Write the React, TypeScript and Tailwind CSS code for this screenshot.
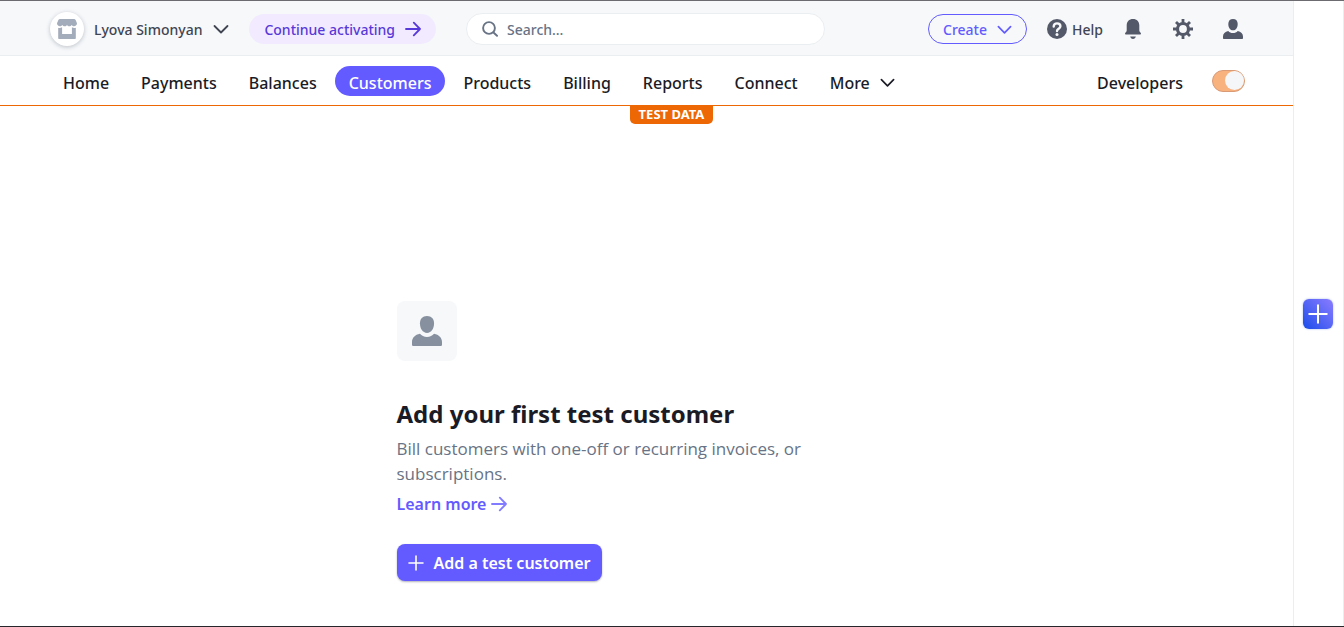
import type { ReactNode } from 'react';

type IconProps = { className?: string };

function ChevronDown({ className = '' }: IconProps) {
  return (
    <svg viewBox="0 0 16 16" className={className} fill="none" stroke="currentColor" strokeWidth="1.8" strokeLinecap="round" strokeLinejoin="round" aria-hidden="true">
      <path d="M1.500 5 8 11.500 14.500 5" />
    </svg>
  );
}

function ArrowRight({ className = '' }: IconProps) {
  return (
    <svg viewBox="0 0 16 16" className={className} fill="none" stroke="currentColor" strokeWidth="1.8" strokeLinecap="round" strokeLinejoin="round" aria-hidden="true">
      <path d="M1 8h14M8.800 1.600 15 8l-6.200 6.400" />
    </svg>
  );
}

function Plus({ className = '' }: IconProps) {
  return (
    <svg viewBox="0 0 16 16" className={className} fill="none" stroke="currentColor" strokeWidth="1.6" strokeLinecap="round" aria-hidden="true">
      <path d="M8 1v14M1 8h14" />
    </svg>
  );
}

function Store({ className = '' }: IconProps) {
  return (
    <svg viewBox="0 0 20 20" className={className} fill="currentColor" aria-hidden="true">
      <path d="M3 0h14c.8 0 1.300.4 1.600 1.100L20 4.300c0 1.700-1.300 2.900-2.900 2.900-1 0-1.900-.5-2.400-1.300-.5.800-1.400 1.300-2.400 1.300S10.500 6.700 10 5.900c-.5.800-1.300 1.300-2.300 1.300S5.800 6.700 5.300 5.900c-.5.800-1.400 1.300-2.400 1.300C1.300 7.200 0 6 0 4.300l1.400-3.200C1.700.4 2.200 0 3 0Z" />
      <path d="M1.200 8.700c1.300.4 2.700.2 3.900-.5V15h9.800V8.200c1.200.7 2.600.9 3.900.5V19c0 .6-.4 1-1 1H2.200c-.6 0-1-.4-1-1V8.700Z" />
    </svg>
  );
}

function Search({ className = '' }: IconProps) {
  return (
    <svg viewBox="0 0 16 16" className={className} fill="none" stroke="currentColor" strokeWidth="1.9" strokeLinecap="round" aria-hidden="true">
      <circle cx="7" cy="7" r="5.9" />
      <path d="m11.500 11.500 3.500 3.300" />
    </svg>
  );
}

function Question({ className = '' }: IconProps) {
  return (
    <svg viewBox="0 0 20 20" className={className} aria-hidden="true">
      <circle cx="10" cy="10" r="10" fill="#545969" />
      <path d="M6.700 7.500C6.700 5.600 8.100 4.400 10 4.400s3.400 1.200 3.400 2.900c0 2.400-3.400 2.500-3.400 4.700" fill="none" stroke="#f6f8fa" strokeWidth="2.4" strokeLinecap="round" />
      <circle cx="10" cy="15.400" r="1.5" fill="#f6f8fa" />
    </svg>
  );
}

function Bell({ className = '' }: IconProps) {
  return (
    <svg viewBox="0 0 16 20" className={className} fill="currentColor" aria-hidden="true">
      <path d="M8 0c3.900 0 6.300 2.600 6.300 6.300v5.200c0 .8.400 1.200.9 1.700.5.500.8.900.8 1.500 0 .5-.3.800-.8.800H.8c-.5 0-.8-.3-.8-.8 0-.6.300-1 .8-1.500s.9-.9.900-1.700V6.300C1.700 2.600 4.100 0 8 0Z" />
      <path d="M5.200 17.500h5.600C10.500 19 9.500 20 8 20s-2.500-1-2.800-2.500Z" />
    </svg>
  );
}

function Gear({ className = '' }: IconProps) {
  return (
    <svg viewBox="0 0 20 20" className={className} fill="none" stroke="currentColor" aria-hidden="true">
      <circle cx="10" cy="10" r="5.500" strokeWidth="3.200" />
      <path strokeWidth="2.800" strokeLinejoin="round" d="M10 0v4M10 16v4M0 10h4M16 10h4M3 3l2.800 2.800M14.200 14.200l2.800 2.800M3 17l2.800-2.800M14.200 5.800 17 3" />
    </svg>
  );
}

function Person({ className = '' }: IconProps) {
  return (
    <svg viewBox="0 0 20 20" className={className} fill="currentColor" aria-hidden="true">
      <path d="M10 0c3 0 4.700 2 4.700 4.900 0 3.600-1.800 6.400-4.700 6.400S5.300 8.500 5.300 4.900C5.300 2 7 0 10 0Z" />
      <path d="M5.300 11.900C6.400 13.200 8 14 10 14s3.600-.8 4.700-2.100c3.300.6 5.300 2.700 5.300 5.600v1.500c0 .7-.4 1-1 1H1c-.6 0-1-.3-1-1v-1.500c0-2.900 2-5 5.300-5.600Z" />
    </svg>
  );
}

function NavLink({ children, active = false }: { children: ReactNode; active?: boolean }) {
  return (
    <a
      href="#"
      aria-current={active ? 'page' : undefined}
      className={
        active
          ? 'flex h-[30px] items-center rounded-full bg-[#635bff] px-[14px] pt-1 text-white'
          : 'flex h-[30px] items-center px-[14px] pt-1 text-[#1a1b25]'
      }
    >
      {children}
    </a>
  );
}

function TopBar() {
  return (
    <header className="flex h-[55px] items-center border-b border-[#ebeef1] bg-[#f6f8fa] pt-[2px] pr-[50px] pl-[50px] text-[14px] font-medium text-[#414552]">
      <button type="button" className="flex items-center">
        <span className="mr-[10px] flex size-[34px] items-center justify-center rounded-full bg-white text-[#a3acba] shadow-[0_1px_4px_rgba(60,66,87,0.3)]">
          <Store className="size-5" />
        </span>
        <span>Lyova Simonyan</span>
        <ChevronDown className="ml-[11px] size-4" />
      </button>
      <a href="#" className="ml-5 flex h-[30px] items-center gap-[10px] rounded-full bg-[#f2ebff] px-[15px] text-[#5739d9]">
        Continue activating
        <ArrowRight className="size-4" />
      </a>
      <label className="ml-[30px] flex h-8 max-w-[359px] flex-1 items-center gap-[9px] rounded-full border border-[#ebeef1] bg-white px-[15px] text-[#687385]">
        <Search className="size-4" />
        <input type="text" aria-label="Search" placeholder="Search…" className="min-w-0 flex-1 bg-transparent outline-none placeholder:text-[#687385]" />
      </label>
      <div className="ml-auto flex items-center">
        <button type="button" className="flex h-[30px] items-center gap-[10px] rounded-full border border-[#635bff] px-[14px] text-[#635bff]">
          Create
          <ChevronDown className="size-[15px]" />
        </button>
        <button type="button" className="ml-5 flex items-center gap-[5px]">
          <Question className="size-5" />
          Help
        </button>
        <button type="button" aria-label="Notifications" className="ml-[22px] text-[#545969]">
          <Bell className="h-5 w-4" />
        </button>
        <button type="button" aria-label="Settings" className="ml-8 text-[#545969]">
          <Gear className="size-5" />
        </button>
        <button type="button" aria-label="Profile" className="ml-[30px] text-[#545969]">
          <Person className="size-5" />
        </button>
      </div>
    </header>
  );
}

function MainNav() {
  return (
    <nav className="flex h-[50px] items-center border-b border-[#ed6704] pr-12 pl-[49px] text-[16px] font-medium">
      <div className="flex items-center gap-1">
        <NavLink>Home</NavLink>
        <NavLink>Payments</NavLink>
        <NavLink>Balances</NavLink>
        <NavLink active>Customers</NavLink>
        <NavLink>Products</NavLink>
        <NavLink>Billing</NavLink>
        <NavLink>Reports</NavLink>
        <NavLink>Connect</NavLink>
        <NavLink>
          More
          <ChevronDown className="ml-[10px] size-[15px]" />
        </NavLink>
      </div>
      <div className="ml-auto flex items-center gap-[15px]">
        <NavLink>Developers</NavLink>
        <label className="relative flex h-[22px] w-[33px] cursor-pointer items-center justify-end rounded-full border border-[#d99a76] bg-[#f8b27e]">
          <input type="checkbox" defaultChecked aria-label="Test mode" className="absolute inset-0 opacity-0" />
          <span className="size-[19px] rounded-full bg-[#f5f6f8]" />
        </label>
      </div>
    </nav>
  );
}

function EmptyState() {
  return (
    <section className="mx-auto flex w-full max-w-[500px] flex-1 flex-col items-start pt-[177px] pb-11">
      <div className="flex size-[60px] items-center justify-center rounded-lg bg-[#f6f8fa] text-[#87909f]">
        <Person className="size-[30px]" />
      </div>
      <h1 className="mt-[35px] text-[24px] leading-9 font-bold text-[#1a1b25]">Add your first test customer</h1>
      <p className="mt-1 max-w-[410px] font-['Open_Sans',sans-serif] text-[17px] leading-[25px] text-[#687385]">
        Bill customers with one-off or recurring invoices, or subscriptions.
      </p>
      <a href="#" className="mt-[5px] flex items-center gap-[5px] text-[16px] leading-[26px] font-semibold text-[#635bff]">
        Learn more
        <ArrowRight className="size-4 opacity-80" />
      </a>
      <button type="button" className="mt-[27px] flex h-[37px] items-center gap-[10px] rounded-lg bg-[#635bff] px-[11px] pt-px text-[16px] font-semibold text-white shadow-[0_1px_2px_rgba(60,66,87,0.4)]">
        <Plus className="size-4" />
        Add a test customer
      </button>
    </section>
  );
}

export default function App() {
  return (
    <div className="flex min-h-screen border-y border-t-[#6b6b70] border-b-[#26262b] bg-white font-['Noto_Sans',sans-serif]">
      <div className="flex min-w-0 flex-1 flex-col">
        <TopBar />
        <MainNav />
        <main className="flex flex-1 flex-col">
          <div className="flex justify-center pl-[50px]">
            <div className="flex h-[18px] items-center rounded-b-[5px] bg-[#ed6704] px-[9px] text-[13px] font-bold whitespace-nowrap text-white">
              TEST DATA
            </div>
          </div>
          <EmptyState />
        </main>
      </div>
      <aside className="flex w-[51px] flex-col items-start justify-center border-x border-[#ebeef1] bg-white pl-[9px]">
        <button type="button" aria-label="Open toolbar" className="flex size-[30px] items-center justify-center rounded-md bg-linear-to-tr from-[#0f4bea] to-[#8a7bff] text-white shadow-[0_0_2px_rgba(60,100,200,0.5)]">
          <Plus className="size-5" />
        </button>
      </aside>
    </div>
  );
}
